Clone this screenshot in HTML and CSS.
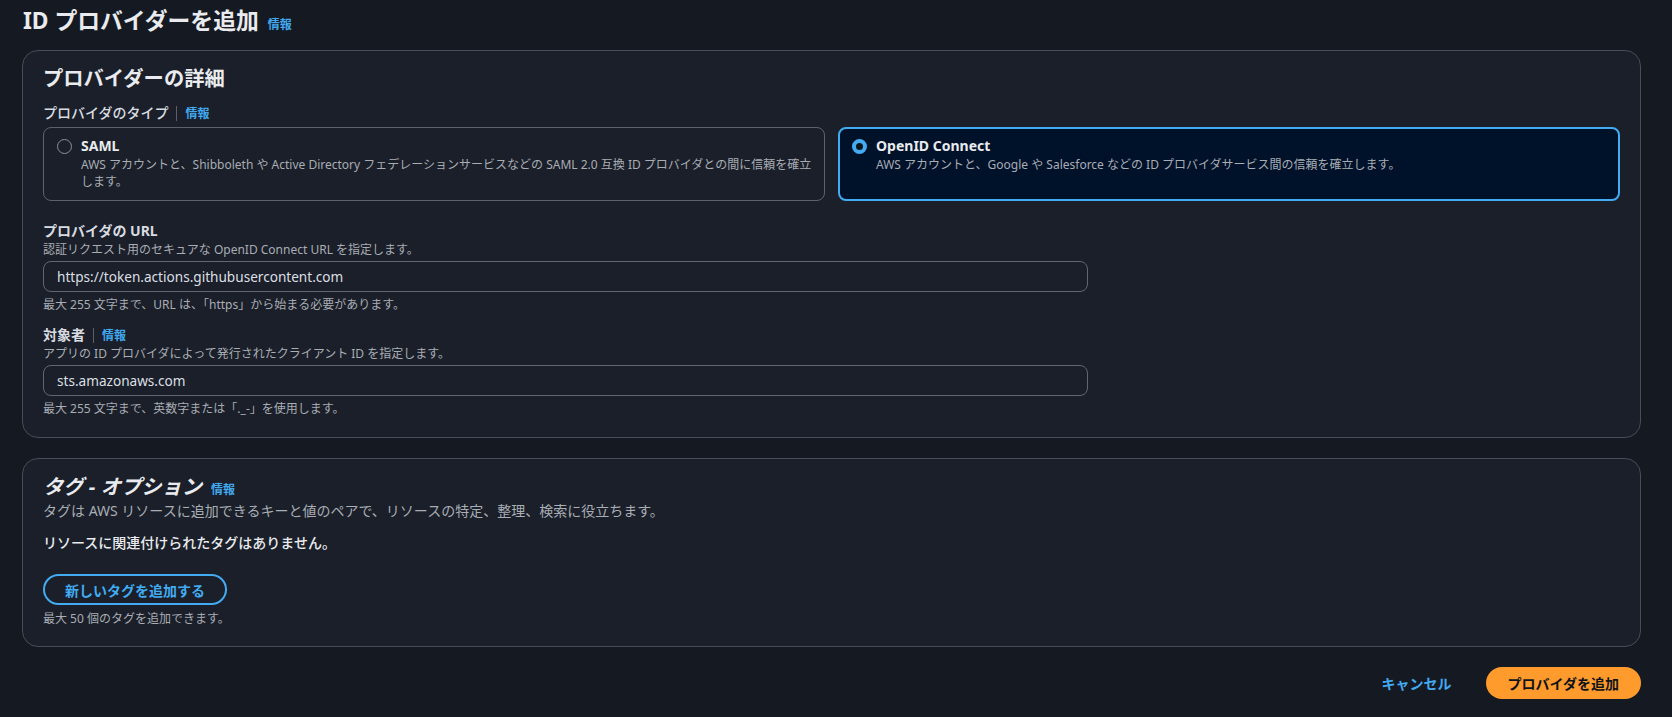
FILE: index.html
```html
<!DOCTYPE html>
<html lang="ja">
<head>
<meta charset="utf-8">
<title>ID プロバイダーを追加</title>
<link rel="stylesheet" href="styles.css">
</head>
<body>
<div class="page">
  <header class="page-header">
    <h1 class="page-title">ID プロバイダーを追加</h1>
    <a class="info-link">情報</a>
  </header>

  <section class="container">
    <h2 class="container-title">プロバイダーの詳細</h2>

    <div class="field-label-row type-label">
      <span class="field-label">プロバイダのタイプ</span>
      <span class="label-sep"></span>
      <a class="info-link">情報</a>
    </div>

    <div class="tiles">
      <div class="tile">
        <span class="radio"></span>
        <div class="tile-text">
          <div class="tile-label">SAML</div>
          <div class="tile-desc">AWS アカウントと、Shibboleth や Active Directory フェデレーションサービスなどの SAML 2.0 互換 ID プロバイダとの間に信頼を確立します。</div>
        </div>
      </div>
      <div class="tile tile-selected">
        <span class="radio radio-checked"></span>
        <div class="tile-text">
          <div class="tile-label">OpenID Connect</div>
          <div class="tile-desc">AWS アカウントと、Google や Salesforce などの ID プロバイダサービス間の信頼を確立します。</div>
        </div>
      </div>
    </div>

    <div class="field field-first">
      <div class="field-label-row">
        <span class="field-label">プロバイダの URL</span>
      </div>
      <div class="field-desc">認証リクエスト用のセキュアな OpenID Connect URL を指定します。</div>
      <div class="input">https://token.actions.githubusercontent.com</div>
      <div class="field-constraint">最大 255 文字まで、URL は、「https」から始まる必要があります。</div>
    </div>

    <div class="field">
      <div class="field-label-row">
        <span class="field-label">対象者</span>
        <span class="label-sep"></span>
        <a class="info-link">情報</a>
      </div>
      <div class="field-desc">アプリの ID プロバイダによって発行されたクライアント ID を指定します。</div>
      <div class="input">sts.amazonaws.com</div>
      <div class="field-constraint">最大 255 文字まで、英数字または「._-」を使用します。</div>
    </div>
  </section>

  <section class="container container-tags">
    <div class="title-row">
      <h2 class="container-title italic">タグ - オプション</h2>
      <a class="info-link">情報</a>
    </div>
    <div class="container-desc">タグは AWS リソースに追加できるキーと値のペアで、リソースの特定、整理、検索に役立ちます。</div>
    <div class="empty-text">リソースに関連付けられたタグはありません。</div>
    <div class="btn-row">
      <button class="btn btn-normal">新しいタグを追加する</button>
    </div>
    <div class="field-constraint tag-constraint">最大 50 個のタグを追加できます。</div>
  </section>

  <footer class="actions">
    <button class="btn btn-link">キャンセル</button>
    <button class="btn btn-primary">プロバイダを追加</button>
  </footer>
</div>
</body>
</html>
```

FILE: styles.css
```css
* { box-sizing: border-box; }

html, body {
  margin: 0;
  padding: 0;
  background: #151a22;
}

body {
  font-family: "Noto Sans", "Noto Sans CJK JP", sans-serif;
  color: #d5d8dc;
  font-size: 14px;
}

.page {
  padding: 6px 31px 0 22px;
}

.page-header {
  display: flex;
  align-items: baseline;
  gap: 9px;
  height: 44px;
  padding-left: 1px;
}

.page-title {
  margin: 0;
  font-size: 22.8px;
  line-height: 30px;
  font-weight: 700;
  color: #e9ebee;
}

.info-link {
  color: #42a8ee;
  font-size: 12px;
  font-weight: 700;
  text-decoration: none;
  cursor: pointer;
}

.container {
  background: #1a1f29;
  border: 1px solid #474c56;
  border-radius: 16px;
  padding: 15px 20px 20px 20px;
}

.container-tags {
  margin-top: 20px;
  padding-bottom: 19px;
}

.container-title {
  margin: 0;
  font-size: 20.3px;
  line-height: 24px;
  font-weight: 700;
  color: #e9ebee;
}

.container-title.italic {
  font-style: italic;
}

.title-row {
  display: flex;
  align-items: baseline;
  gap: 9px;
}

.field-label-row {
  display: flex;
  align-items: center;
  height: 20px;
}

.type-label {
  margin-top: 13px;
}

.field-label {
  font-size: 14px;
  font-weight: 700;
  color: #d9dce0;
  line-height: 20px;
}

.type-label .field-label {
  font-weight: 500;
}

.label-sep {
  width: 1px;
  height: 15px;
  background: #5b606a;
  margin: 0 8px 0 8px;
}

.tiles {
  display: grid;
  grid-template-columns: 1fr 1fr;
  gap: 13px;
  margin-top: 4px;
}

.tile {
  display: flex;
  align-items: flex-start;
  gap: 9px;
  min-height: 73px;
  border: 1px solid #5c616b;
  border-radius: 8px;
  padding: 8px 12px 10px 13px;
}

.tile-selected {
  border: 2px solid #42abf2;
  background: #00112a;
  padding: 7px 11px 9px 12px;
}

.radio {
  flex: none;
  width: 15px;
  height: 15px;
  margin-top: 3px;
  border-radius: 50%;
  border: 1.5px solid #8c9099;
}

.radio-checked {
  border: 4px solid #42abf2;
  background: #0f141b;
}

.tile-label {
  font-size: 14px;
  line-height: 20px;
  font-weight: 700;
  color: #e9ebee;
}

.tile-desc {
  font-size: 12px;
  line-height: 17px;
  color: #a9adb4;
}

.field {
  margin-top: 12px;
}

.field-first {
  margin-top: 20px;
}

.field-desc {
  font-size: 12px;
  line-height: 17px;
  color: #a9adb4;
}

.input {
  margin-top: 3px;
  width: 1045px;
  height: 31px;
  border: 1px solid #62666f;
  border-radius: 8px;
  padding: 0 13px;
  display: flex;
  align-items: center;
  font-size: 13.6px;
  color: #dcdfe3;
}

.field-constraint {
  margin-top: 4px;
  font-size: 12px;
  line-height: 17px;
  color: #a9adb4;
}

.tag-constraint {
  margin-top: 5px;
}

.container-desc {
  margin-top: 4px;
  font-size: 14px;
  line-height: 17px;
  color: #a9adb4;
}

.empty-text {
  margin-top: 14px;
  font-size: 14px;
  line-height: 20px;
  font-weight: 500;
  color: #e9ebee;
}

.btn-row {
  margin-top: 21px;
  display: flex;
}

.btn {
  font-family: "Noto Sans", "Noto Sans CJK JP", sans-serif;
  font-size: 14px;
  font-weight: 700;
  cursor: pointer;
}

.btn-normal {
  height: 31px;
  border: 2px solid #42abf2;
  border-radius: 20px;
  background: transparent;
  color: #42abf2;
  padding: 0 20px;
}

.actions {
  display: flex;
  justify-content: flex-end;
  align-items: center;
  gap: 14px;
  margin-top: 20px;
}

.btn-link {
  background: transparent;
  border: none;
  color: #42abf2;
  height: 32px;
  padding: 0 20px;
}

.btn-primary {
  height: 32px;
  border: none;
  border-radius: 20px;
  background: #ff9a2c;
  color: #0f141a;
  padding: 0 22px;
}
```
